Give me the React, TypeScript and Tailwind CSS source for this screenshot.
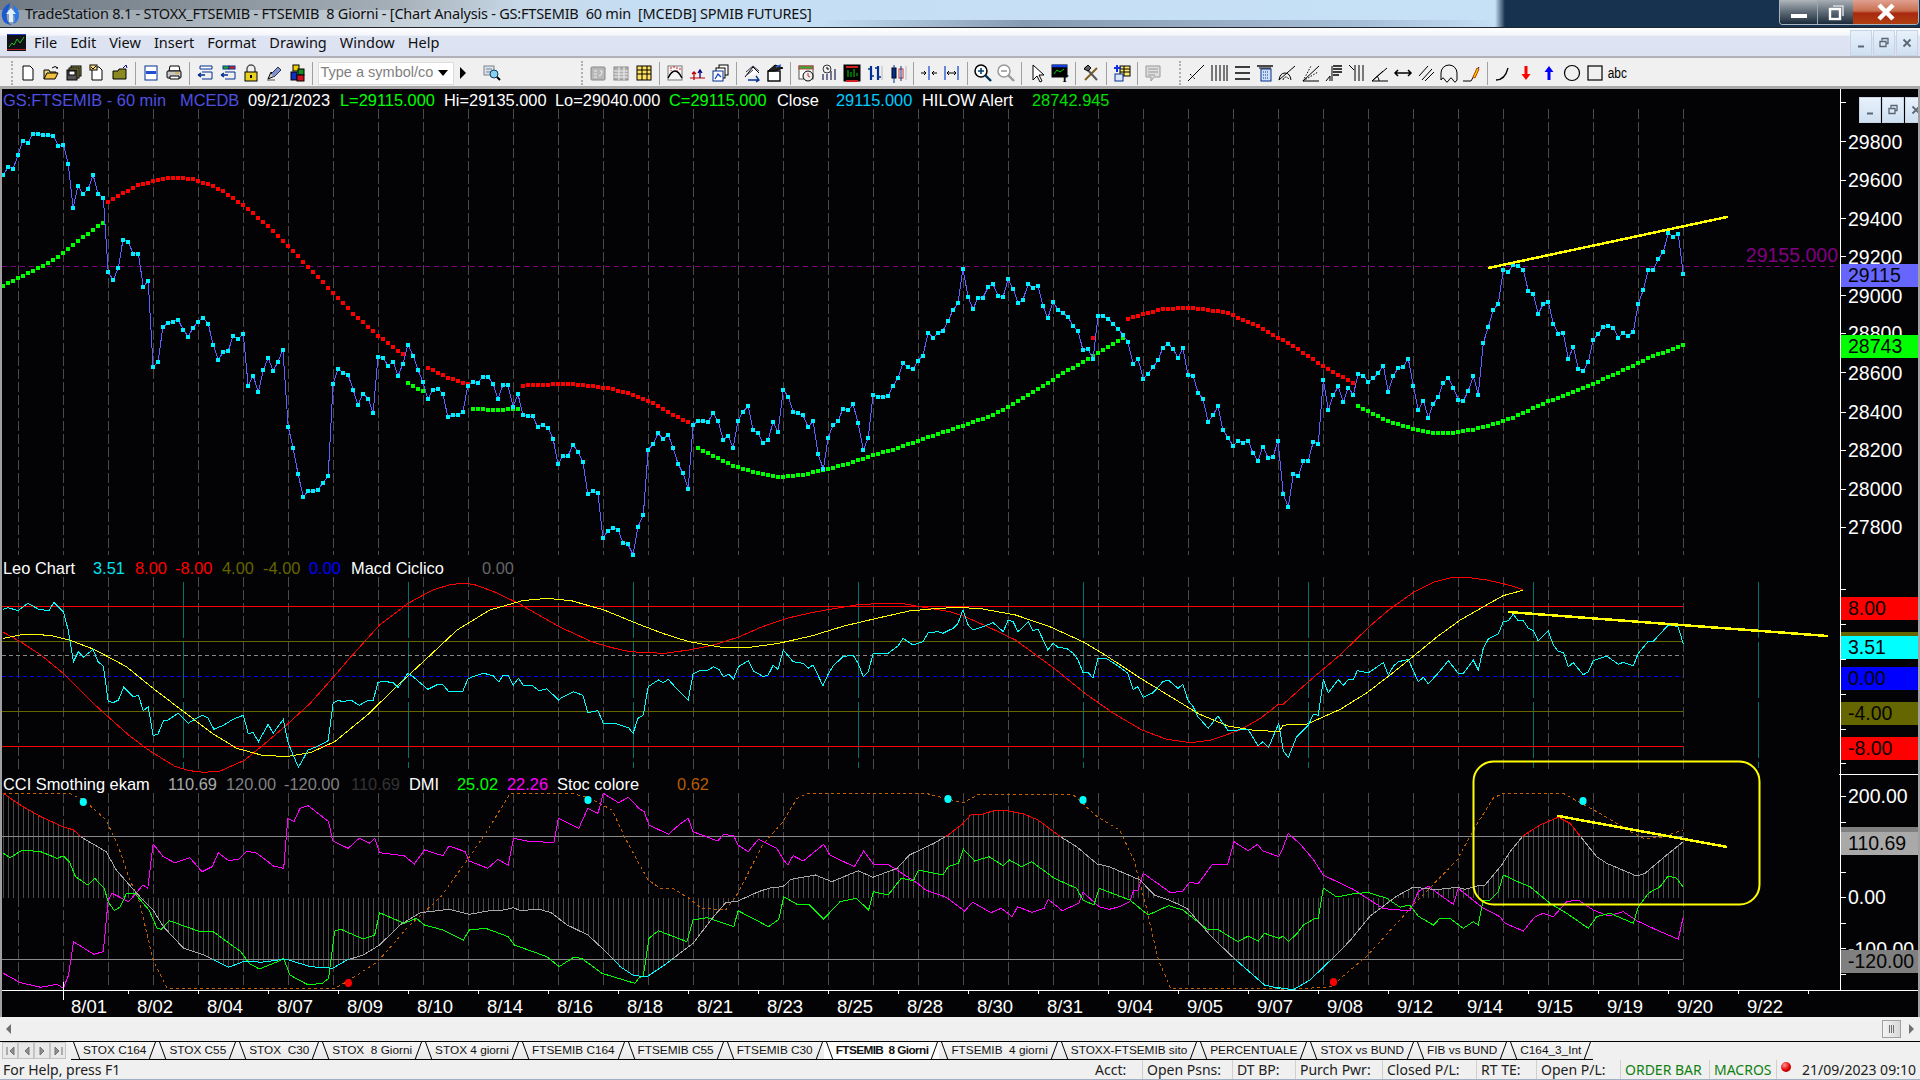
import type { ReactNode } from "react";

type P = [number, number];

// reads points off the picture in crop coordinates, so each crop gets its own scale
const conv = (sx: number, ox: number, sy: number, oy: number) => (a: number[]) => {
  const r: P[] = [];
  for (let i = 0; i < a.length; i += 2) r.push([ox + a[i] / sx, oy + a[i + 1] / sy]);
  return r;
};
const zA = conv(2.45, 0, 3, 90);
const zB = conv(2.45, 640, 3, 90);
const zC = conv(3, 1200, 2.24, 280);
const zD = conv(3, 1440, 3, 90);
const zE = conv(2.45, 0, 3, 560);
const zF = conv(2.45, 640, 3, 560);
const zG = conv(3, 1440, 3, 570);

const price: P[] = [
  ...zA([8,255,20,230,32,237,44,195,56,152,68,159,80,131,93,131,105,135,118,135,130,137,143,167,155,164,167,222,179,354,191,287,203,312,216,296,228,255,240,312,253,323,265,546,277,570,290,534,301,450,314,455,326,491,339,491,351,591,363,572,375,830,387,816,399,711,412,698,424,695,436,689,449,719,461,740,473,713,485,695,498,683,510,701,522,764,535,810,547,785,559,783,571,738,583,747,596,732,608,888,620,857,633,906,645,840,657,803,669,843,681,815,693,779,706,1010,718,1073,730,1151,743,1221,755,1203,767,1203,779,1199,791,1179,804,1158,816,882,828,836,840,848,853,855,865,899,877,945,889,911,902,926,914,969,926,801,938,803,951,827,963,815,975,858,987,822,999,764,1012,797,1024,840,1036,875,1048,927,1061,899,1073,896,1085,911,1097,981,1110,975,1122,975,1134,966,1146,888,1158,875,1171,878,1183,860,1195,860,1208,881,1220,927,1232,885,1244,885,1257,950,1269,913,1281,974,1293,978,1305,978,1317,1011,1330,1005,1342,1013,1355,1046,1367,1122,1379,1098,1391,1098,1404,1065,1416,1085,1428,1115,1440,1212,1452,1203,1465,1210,1477,1344,1489,1323,1502,1314,1514,1319,1526,1358,1538,1362,1551,1394,1563,1310]),
  ...zB([8,1275,20,1079,32,1062,44,1030,57,1047,69,1034,81,1073,93,1121,105,1149,118,1197,130,1005,142,993,155,993,167,995,179,970,191,992,204,1050,216,1037,228,1074,240,993,252,965,265,949,277,1019,289,1030,302,1060,314,1050,326,995,338,1026,351,899,363,920,375,965,387,970,399,975,412,1012,424,992,436,1091,449,1138,461,1043,473,1005,485,994,497,956,510,960,522,943,534,998,547,1080,559,1043,571,914,583,920,596,922,608,917,620,887,632,864,644,820,657,832,669,838,681,812,693,797,706,728,718,743,730,730,742,722,755,692,767,660,779,640,791,536,804,622,816,657,828,623,840,623,853,592,865,583,877,617,889,622,902,568,914,596,926,640,938,629,951,583,963,594,975,587,987,647,999,685,1012,635,1024,659,1036,669,1048,680,1061,708,1073,722,1085,780,1097,776,1110,807,1122,678,1134,677,1147,686,1159,702,1171,716,1183,734,1195,755,1208,822,1220,806,1233,867,1245,851,1257,832,1269,811,1281,773,1294,761,1306,777,1318,804,1330,773,1342,854,1355,857,1367,908,1379,927,1392,995,1404,974,1416,949,1428,1021,1441,1043,1453,1068,1465,1052,1477,1058,1490,1052,1502,1090,1514,1113,1526,1070,1539,1104,1551,1100,1563,1052]),
  ...zC([250,480,265,508,280,435,295,439,310,405,325,405,340,362,355,367,370,224,385,291,400,258,415,238,430,274,445,241,460,257,475,210,490,214,505,228,520,220,535,208,550,192,565,250,580,215,595,197,610,194,625,176,640,237,655,291,670,270,685,309,700,277,715,262,730,230,745,219,760,241,775,268,790,271,805,248,820,215,835,257]),
  ...zD([130,759,145,711,160,660,175,641,190,540,205,546,220,525,235,527,250,540,265,603,280,611,295,672,310,642,325,635,340,702,355,731,370,729,385,807,400,771,415,836,430,843,445,815,460,749,475,732,490,711,505,708,520,714,535,743,550,729,565,737,580,725,595,641,610,600,625,540,640,539,655,507,670,486,685,429,700,441,715,432,730,552]),
];

const dotRuns: { c: string; p: P[] }[] = [
  { c: "#00ff00", p: zA([8,588,81,542,130,512,180,465,228,420,253,398]) },
  { c: "#ff0000", p: zA([265,335,340,285,400,266,430,263,470,267,510,282,547,303,596,345,645,395,705,465,755,530,816,608,865,670,925,735,988,793]) },
  { c: "#ff0000", p: zA([1048,833,1097,862,1146,882]) },
  { c: "#00ff00", p: zA([999,878,1012,887,1036,903]) },
  { c: "#00ff00", p: zA([1158,957,1220,960,1270,956]) },
  { c: "#ff0000", p: [...zA([1281,887,1330,885,1367,881,1428,885,1490,895,1526,905,1563,920]), ...zB([8,927,32,940,81,975,118,996])] },
  { c: "#00ff00", p: zB([142,1073,180,1098,229,1127,277,1146,326,1158,351,1161,400,1155,449,1140,510,1122,571,1095,632,1075,693,1047,754,1023,816,997,865,975,926,935,987,890,1036,850,1085,818,1122,790,1183,745]) },
  { c: "#ff0000", p: zB([1110,743,1112,743]) },
  { c: "#ff0000", p: [...zB([1195,687,1232,672,1281,658,1330,654,1380,656,1441,670,1490,695,1526,715,1563,742]), ...zC([250,135,295,155,340,178,385,200,430,218,460,230])] },
  { c: "#00ff00", p: [...zC([475,283,520,300,565,316,610,327,655,337,700,342,760,342,820,335,880,323,940,308,985,293,1045,272,1105,255,1165,237,1225,218,1285,197,1345,175,1435,150]), ...zD([730,765])] },
];

const leoCyan: P[] = [
  ...zE([8,148,20,143,44,152,68,130,95,148,120,152,132,127,155,155,167,210,180,305,192,275,204,292,228,268,240,305,253,318,265,423,277,428,290,420,303,382,326,410,339,406,351,452,363,440,375,527,387,522,400,483,412,480,436,460,461,490,485,472,497,466,510,475,524,508,547,496,571,478,596,466,608,520,620,518,633,545,657,493,669,520,694,478,706,550,731,622,755,570,780,558,804,542,816,430,828,421,840,425,860,420,880,436,902,421,914,422,926,367,940,364,963,368,975,383,999,340,1012,350,1048,388,1073,373,1085,374,1100,396,1122,394,1134,393,1146,358,1158,350,1185,340,1208,347,1222,365,1232,347,1245,347,1257,376,1270,355,1283,378,1305,377,1320,392,1340,386,1368,420,1380,410,1405,395,1428,406,1440,458,1465,452,1478,490,1505,490,1540,503,1551,520,1563,475]),
  ...zF([8,465,20,380,45,360,57,368,69,358,95,393,118,420,130,342,145,333,167,330,180,320,193,328,204,350,218,343,229,358,241,320,265,302,278,333,302,350,314,345,326,316,338,328,351,270,375,305,400,310,412,325,424,315,448,377,461,342,473,318,497,290,522,285,534,310,547,350,559,335,571,282,608,280,632,258,644,235,669,255,693,245,706,218,730,215,742,220,767,205,779,190,791,150,804,195,816,210,840,200,865,188,890,215,902,180,914,185,926,215,951,185,963,212,975,207,999,270,1012,250,1025,263,1045,265,1061,280,1073,300,1085,337,1097,337,1110,354,1122,295,1145,297,1171,318,1195,340,1208,388,1220,380,1233,412,1257,398,1281,365,1294,360,1318,385,1330,373,1342,420,1355,440,1367,470,1392,505,1416,468,1441,512,1490,508,1514,558,1526,545,1540,562,1565,490]),
  ...zC([250,1055,265,1070,290,1023,325,997,340,973,355,975,370,895,385,925,415,895,430,908,445,895,460,895,472,875,505,880,550,857,565,885,580,865,595,855,625,850,655,900,670,890,685,905,715,880]),
  ...zG([25,272,55,310,70,310,100,270,115,300,130,235,145,207,175,192,190,155,205,152,220,133,235,153,250,152,265,175,280,182,295,213,325,183,340,225,355,245,370,247,385,290,400,278,430,314,445,305,460,272,500,258,535,283,550,277,580,287,595,250,625,214,640,214,685,165,700,165,715,172,730,222]),
];

const leoRed: P[] = [
  ...zE([8,217,50,245,100,285,160,345,220,420,260,465,320,530,370,575,430,620,465,632,500,637,540,633,600,600,650,550,700,497,760,430,800,375,860,290,930,195,1000,130,1060,90,1100,75,1130,70,1160,73,1210,95,1270,130,1370,200,1450,245,1490,260,1530,272,1565,277]),
  ...zF([60,280,120,270,180,255,240,232,300,200,360,175,420,158,480,145,530,135,590,130,650,132,700,143,760,155,800,172,860,205,920,240,970,285,1020,330,1090,400,1160,460,1230,510,1290,538,1350,548,1400,540,1470,510,1520,475,1565,432]),
  ...zC([250,950,325,900,420,840,510,775,570,737,640,700,700,677,760,666,800,666,860,672,920,682,968,693]),
];

const leoYellow: P[] = [
  ...zE([8,235,50,225,90,223,130,228,170,240,230,268,310,320,370,380,450,455,520,520,580,565,640,585,700,590,760,578,820,545,900,465,980,370,1050,290,1120,210,1200,150,1280,122,1340,115,1400,122,1480,150,1565,193]),
  ...zF([60,222,120,245,200,262,270,262,340,250,420,228,500,198,580,175,660,153,720,146,780,142,840,147,920,165,1000,198,1085,245,1140,285,1220,350,1300,410,1370,462,1440,498,1500,510,1565,515]),
  ...zC([250,997,320,995,420,962,500,925,570,885,640,843,710,800,780,762,850,732,910,707,968,695]),
];

const cci: P[] = [
  ...zE([8,700,50,735,100,770,150,798,180,810,200,832,225,850,260,875,285,930,310,965,350,1020,375,1050,400,1100,450,1165,500,1185,560,1222,600,1203,640,1207,700,1197,760,1220,815,1225,850,1200,890,1185,930,1155,980,1095,1030,1058,1100,1048,1150,1063,1200,1052,1225,1052,1258,1043,1275,1052,1320,1047,1350,1058,1390,1095,1440,1125,1480,1170,1520,1220,1550,1245,1565,1248]),
  ...zF([20,1248,60,1215,130,1150,180,1070,210,1028,240,1023,290,995,320,983,350,980,370,958,430,945,470,965,535,932,570,952,630,925,660,885,720,850,755,825,790,792,810,765,840,762,870,751,895,751,940,762,975,780,1030,830,1070,860,1120,912,1150,920,1225,960,1260,1005,1300,1022,1340,1045,1400,1130,1460,1200,1530,1275,1565,1285]),
  ...zC([235,1585,280,1590,330,1568,390,1525,450,1480,510,1425,590,1380,640,1360,700,1365,715,1365]),
  ...zG([0,958,50,952,75,958,110,948,135,945,185,885,210,845,250,797,300,765,355,742,390,760,430,810,470,860,500,880,590,918,615,910,680,855,730,815]),
];

const dmiGreen: P[] = [
  ...zE([8,880,25,893,55,870,100,875,140,895,155,888,170,905,185,950,215,975,232,955,255,985,265,1025,280,1052,295,1040,310,1000,330,1000,365,1050,385,1105,395,1108,415,1082,490,1115,520,1113,590,1175,610,1210,635,1227,680,1205,695,1195,710,1245,755,1275,790,1270,805,1255,820,1113,835,1108,890,1137,918,1125,930,1058,990,1090,1020,1075,1040,1095,1085,1110,1135,1140,1150,1110,1190,1105,1245,1130,1260,1155,1340,1190,1370,1220,1405,1192,1425,1195,1475,1240,1555,1270,1565,1255]),
  ...zF([8,1248,22,1135,45,1112,115,1145,130,1080,165,1073,230,1100,240,1052,315,1100,340,1078,352,1010,385,1033,415,1035,450,1077,490,1025,530,1015,560,1050,572,995,608,1005,640,955,670,962,682,930,742,945,755,920,780,910,792,867,820,903,855,890,890,917,905,900,935,920,960,905,1015,955,1070,985,1085,1020,1112,1035,1125,985,1200,1020,1245,1065,1295,1037,1330,1050,1390,1108,1415,1108,1465,1145,1490,1128,1515,1143,1530,1120,1565,1135]),
  ...zC([250,1470,265,1482,290,1465,310,1445,345,1430,355,1430,370,1362,410,1382,460,1375,505,1372,560,1385,600,1405,630,1400,655,1425,700,1445]),
  ...zG([0,1045,30,1045,70,1075,100,1055,115,1065,130,990,150,990,175,965,190,915,240,938,270,950,330,1000,380,1030,445,1075,470,1040,510,1030,580,1060,595,1010,625,970,660,950,685,918,710,925,730,952]),
];

const dmiMagenta: P[] = [
  ...zE([8,1240,50,1268,100,1282,140,1273,155,1285,168,1245,180,1145,230,1183,253,1175,265,1020,275,1000,315,1025,350,975,362,985,375,852,400,890,428,908,465,893,495,935,520,920,535,878,560,902,585,897,605,873,630,880,670,918,695,925,705,775,720,785,735,745,755,737,805,785,815,843,853,865,880,835,905,850,918,835,930,878,990,887,1015,912,1040,870,1085,887,1100,858,1140,875,1148,902,1195,925,1220,898,1245,916,1258,835,1300,845,1357,847,1368,775,1418,805,1440,745,1465,760,1478,700,1515,728,1540,712,1565,745]),
  ...zF([10,755,22,795,70,823,95,795,118,775,130,815,190,843,205,823,230,828,240,855,265,875,290,838,335,865,352,900,362,915,375,887,400,903,450,853,465,885,525,920,548,873,572,912,610,915,680,970,700,990,750,1012,795,1053,815,1027,860,1058,885,1045,912,1070,925,1040,960,1057,990,1045,1000,1018,1035,1052,1075,1030,1085,997,1125,1040,1150,1048,1175,1040,1200,1025,1210,990,1220,990,1233,940,1300,998,1330,993,1345,968,1368,970,1403,912,1440,912,1455,845,1490,872,1513,853,1525,872,1565,890]),
  ...zC([250,1270,265,1240,300,1263,340,1298,370,1333,460,1365,550,1408,630,1413,655,1370,685,1358,710,1372]),
  ...zG([0,975,40,1003,55,955,130,1015,180,1040,195,1060,250,1083,285,1040,310,1030,340,1040,380,995,415,990,460,1020,505,1038,550,1025,590,1052,650,1080,715,1108,730,1040]),
];

const stoch: P[] = [
  ...zE([8,700,170,700,205,720,260,780,290,860,315,950,340,1020,360,1120,375,1200,410,1285,820,1285,850,1265,925,1205,1000,1100,1080,1010,1145,900,1190,820,1250,700,1400,700,1440,712,1500,750,1530,830,1565,910]),
  ...zF([20,960,50,985,80,985,120,1015,150,1045,210,1050,240,1000,300,855,350,785,385,715,410,700,700,700,755,717,792,728,830,703,1060,703,1120,770,1175,810,1210,900,1240,1040,1270,1200,1300,1285,1565,1285]),
  ...zC([250,1590,400,1583,420,1565,500,1515,640,1400,770,1300,830,1220,880,1160,910,1150,1090,1150,1200,1195,1290,1235]),
  ...zG([610,805,660,803,700,790,730,780]),
];

const lerp = (pts: P[], x: number) => {
  for (let i = 1; i < pts.length; i++) {
    if (x <= pts[i][0]) {
      const [x0, y0] = pts[i - 1];
      const [x1, y1] = pts[i];
      return y0 + ((y1 - y0) * (x - x0)) / (x1 - x0 || 1);
    }
  }
  return pts[pts.length - 1][1];
};

const bars: number[] = [];
for (let x = 3.3; x < 1684; x += 5) bars.push(x);
const grid: number[] = [];
for (let k = 0; k < 38; k++) grid.push(18.3 + 45 * k);
const pts = (p: P[]) => p.map(([x, y]) => `${x.toFixed(1)},${y.toFixed(1)}`).join(" ");

const SANS = "font-['Liberation_Sans',Arial,sans-serif]";

function Chart() {
  return (
    <svg className="block" width="1920" height="928" viewBox="0 89 1920 928" shapeRendering="crispEdges">
      <defs>
        <clipPath id="cci-top"><rect x="0" y="0" width="1700" height="836.7" /></clipPath>
        <clipPath id="cci-mid"><rect x="0" y="836.7" width="1700" height="122.6" /></clipPath>
        <clipPath id="cci-low"><rect x="0" y="959.3" width="1700" height="40" /></clipPath>
      </defs>

      {grid.map((x) => (
        <g key={x} stroke="#4a4a4a" strokeDasharray="10 3">
          <line x1={x} x2={x} y1="109" y2="555" />
          <line x1={x} x2={x} y1="577" y2="770" />
          <line x1={x} x2={x} y1="793" y2="987" />
        </g>
      ))}

      {/* price pane */}
      <line x1="2" x2="1837" y1="266.500" y2="266.500" stroke="#800080" strokeDasharray="5 4" />
      {dotRuns.map((run, i) =>
        bars
          .filter((x) => x >= run.p[0][0] - 2.5 && x <= run.p[run.p.length - 1][0] + 2.5)
          .map((x) => <rect key={`${i}-${x}`} x={x - 2} y={lerp(run.p, x) - 2} width="4" height="4" fill={run.c} />),
      )}
      <polyline points={pts(price)} fill="none" stroke="#6060ff" />
      {price.map(([x, y]) => <rect key={x} x={x - 2} y={y - 2} width="4" height="4" fill="#00f0ff" />)}
      <line x1="1488.3" y1="268" x2="1728.3" y2="216.7" stroke="#ffff00" strokeWidth="2.500" />

      {/* leo chart pane */}
      {[183.3, 408.3, 633.3, 858.3, 1083.3, 1308.3, 1533.3, 1758.3].map((x) => (
        <line key={x} x1={x} x2={x} y1="582" y2="768" stroke="#007070" strokeDasharray="56 4" />
      ))}
      <g fill="none">
        <line x1="2" x2="1683" y1="606.500" y2="606.500" stroke="#ff0000" />
        <line x1="2" x2="1683" y1="746.500" y2="746.500" stroke="#ff0000" />
        <line x1="2" x2="1683" y1="641.500" y2="641.500" stroke="#666600" />
        <line x1="2" x2="1683" y1="711.500" y2="711.500" stroke="#666600" />
        <line x1="2" x2="1683" y1="655.500" y2="655.500" stroke="#888" strokeDasharray="4 3" />
        <line x1="2" x2="1683" y1="676.500" y2="676.500" stroke="#0000ff" strokeDasharray="4 3" />
      </g>
      <polyline points={pts(leoRed)} fill="none" stroke="#ff0000" />
      <polyline points={pts(leoYellow)} fill="none" stroke="#ffff00" />
      <polyline points={pts(leoCyan)} fill="none" stroke="#00ffff" />
      <line x1="1508.3" y1="612" x2="1827.7" y2="636" stroke="#ffff00" strokeWidth="2.500" />

      {/* cci pane */}
      {bars.map((x) => (
        <line key={x} x1={x} x2={x} y1="898" y2={lerp(cci, x)} stroke="#4a4a4a" />
      ))}
      <line x1="2" x2="1683" y1="836.500" y2="836.500" stroke="#888" />
      <line x1="2" x2="1683" y1="959.500" y2="959.500" stroke="#888" />
      <polyline points={pts(stoch)} fill="none" stroke="#c06000" strokeDasharray="3 3" />
      <polyline points={pts(dmiMagenta)} fill="none" stroke="#ff00ff" />
      <polyline points={pts(dmiGreen)} fill="none" stroke="#00ff00" />
      <polyline points={pts(cci)} fill="none" stroke="#ff0000" clipPath="url(#cci-top)" />
      <polyline points={pts(cci)} fill="none" stroke="#a8a8a8" clipPath="url(#cci-mid)" />
      <polyline points={pts(cci)} fill="none" stroke="#00ffff" clipPath="url(#cci-low)" />
      <g shapeRendering="geometricPrecision">
        {[[83.3, 802], [588, 800], [948, 799], [1083, 800], [1583, 801]].map(([x, y]) => (
          <ellipse key={x} cx={x} cy={y} rx="3.6" ry="4" fill="#00ffff" />
        ))}
        <ellipse cx="348.4" cy="983" rx="3.6" ry="4" fill="#ff0000" />
        <ellipse cx="1333.5" cy="982" rx="3.6" ry="4" fill="#ff0000" />
        <rect x="1473.5" y="761.5" width="286" height="143" rx="20" fill="none" stroke="#ffff00" strokeWidth="2" />
      </g>
      <line x1="1556.7" y1="815.7" x2="1727.3" y2="847" stroke="#ffff00" strokeWidth="2.500" />

      {/* axes */}
      <g stroke="#fff">
        <line x1="1840.500" x2="1840.500" y1="89" y2="990" />
        <line x1="0" x2="1918" y1="990.500" y2="990.500" />
        <line x1="1839" x2="1918" y1="774.500" y2="774.500" />
        <line x1="63.500" x2="63.500" y1="982" y2="1000" />
        {dateTicks.map((x) => <line key={x} x1={x} x2={x} y1="990" y2="994" />)}
        {[102, 141.7, 180, 218.7, 256.7, 295.7, 333, 372.7, 412, 450, 489, 527, 589, 624, 659, 694, 729, 763, 796, 822, 872, 897, 923, 948, 974].map((y) => (
          <line key={y} x1="1840" x2="1846" y1={y} y2={y} />
        ))}
      </g>
    </svg>
  );
}

const dateTicks: number[] = [];
for (let k = 0; k < 25; k++) dateTicks.push(128.6 + 70 * k);
const dates = ["8/02","8/04","8/07","8/09","8/10","8/14","8/16","8/18","8/21","8/23","8/25","8/28","8/30","8/31","9/04","9/05","9/07","9/08","9/12","9/14","9/15","9/19","9/20","9/22"];
const axisLabels: [string, number][] = [
  ["29800", 141.7], ["29600", 180], ["29400", 218.7], ["29200", 256.7], ["29000", 295.7], ["28800", 333], ["28600", 372.7],
  ["28400", 412], ["28200", 450], ["28000", 489], ["27800", 527], ["200.00", 795.7], ["0.00", 897], ["-100.00", 949],
];
const axisBoxes: [string, number, string][] = [
  ["29115", 264, "bg-[#6666ff]"], ["28743", 335, "bg-[#00ff00]"],
  ["", 632, "bg-[#666600]"], ["8.00", 597, "bg-[#ff0000]"], ["3.51", 636, "bg-[#00ffff]"], ["0.00", 667, "bg-[#0000ff]"],
  ["-4.00", 702, "bg-[#666600]"], ["-8.00", 737, "bg-[#ff0000]"],
  ["", 827, "bg-[#808080]"], ["110.69", 832, "bg-[#a9a9a9]"], ["-120.00", 950, "bg-[#808080]"],
];
const legends: { t: string; c: string }[] = [
  { t: "GS:FTSEMIB - 60 min", c: "top-[2px] left-[3px] text-[#4f4fe0]" },
  { t: "MCEDB", c: "top-[2px] left-[180px] text-[#4f4fe0]" },
  { t: "09/21/2023", c: "top-[2px] left-[248px] text-white" },
  { t: "L=29115.000", c: "top-[2px] left-[340px] text-[#00ff00]" },
  { t: "Hi=29135.000", c: "top-[2px] left-[444px] text-white" },
  { t: "Lo=29040.000", c: "top-[2px] left-[555px] text-white" },
  { t: "C=29115.000", c: "top-[2px] left-[669px] text-[#00ff00]" },
  { t: "Close", c: "top-[2px] left-[777px] text-white" },
  { t: "29115.000", c: "top-[2px] left-[836px] text-[#00ccff]" },
  { t: "HILOW Alert", c: "top-[2px] left-[922px] text-white" },
  { t: "28742.945", c: "top-[2px] left-[1032px] text-[#00e000]" },
  { t: "Leo Chart", c: "top-[470px] left-[3px] text-white" },
  { t: "3.51", c: "top-[470px] left-[93px] text-[#00e5f0]" },
  { t: "8.00", c: "top-[470px] left-[135px] text-[#ff0000]" },
  { t: "-8.00", c: "top-[470px] left-[175px] text-[#ff0000]" },
  { t: "4.00", c: "top-[470px] left-[222px] text-[#666600]" },
  { t: "-4.00", c: "top-[470px] left-[263px] text-[#666600]" },
  { t: "0.00", c: "top-[470px] left-[309px] text-[#0000ff]" },
  { t: "Macd Ciclico", c: "top-[470px] left-[351px] text-white" },
  { t: "0.00", c: "top-[470px] left-[482px] text-[#666666]" },
  { t: "CCI Smothing ekam", c: "top-[686px] left-[3px] text-white" },
  { t: "110.69", c: "top-[686px] left-[168px] text-[#a9a9a9]" },
  { t: "120.00", c: "top-[686px] left-[226px] text-[#808080]" },
  { t: "-120.00", c: "top-[686px] left-[284px] text-[#808080]" },
  { t: "110.69", c: "top-[686px] left-[351px] text-[#333333]" },
  { t: "DMI", c: "top-[686px] left-[409px] text-white" },
  { t: "25.02", c: "top-[686px] left-[457px] text-[#00ff00]" },
  { t: "22.26", c: "top-[686px] left-[507px] text-[#ff00ff]" },
  { t: "Stoc colore", c: "top-[686px] left-[557px] text-white" },
  { t: "0.62", c: "top-[686px] left-[677px] text-[#b85c00]" },
];

function ChartPane() {
  return (
    <div className={`relative h-[928px] w-full shrink-0 overflow-hidden border-x-2 border-x-[#a0a0a0] bg-[#030306] ${SANS}`}>
      <div className="absolute -left-[2px] top-0">
        <Chart />
      </div>
      {legends.map((l, i) => (
        <span key={i} className={`absolute -ml-[2px] whitespace-pre text-[16.4px] leading-[19px] ${l.c}`}>{l.t}</span>
      ))}
      <span className="absolute right-[80px] top-[154px] text-[19.5px] leading-[24px] text-[#800080]">29155.000</span>
      {axisLabels.map(([t, y]) => (
        <span key={t} className="absolute left-[1846px] text-[19.5px] leading-[24px] text-white" style={{ top: y - 89 - 12 }}>{t}</span>
      ))}
      {axisBoxes.map(([t, y, bg], i) => (
        <div key={i} className={`absolute left-[1839px] h-[23px] w-[77px] pl-[7px] text-[19.5px] leading-[23px] text-[#050505] ${bg}`} style={{ top: y - 89 }}>{t}</div>
      ))}
      <span className="absolute left-[69px] top-[906px] text-[18.5px] leading-[24px] text-white">8/01</span>
      {dates.map((d, i) => (
        <span key={d} className="absolute top-[906px] text-[18.5px] leading-[24px] text-white" style={{ left: 135 + 70 * i }}>{d}</span>
      ))}
      <div className="absolute right-0 top-[8px] flex gap-[1px]">
        <ChildBtn kind="min" />
        <ChildBtn kind="max" />
        <div className="w-[13px] overflow-hidden"><ChildBtn kind="close" /></div>
      </div>
    </div>
  );
}

function ChildBtn({ kind }: { kind: "min" | "max" | "close" }) {
  return (
    <div className="flex h-[26px] w-[22px] items-center justify-center border border-[#c8d4e4] bg-[linear-gradient(#e8f1fb,#cfe0f2)]">
      <svg width="12" height="12" viewBox="0 0 12 12" fill="none" stroke="#5a6672" strokeWidth="1.3">
        {kind === "min" && <path d="M3 9.5h6" strokeWidth="2" />}
        {kind === "max" && <path d="M4 3.5V1.5h6v5H8M2 4.5h6v5H2z" />}
        {kind === "close" && <path d="M2.5 2.5l7 7M9.5 2.5l-7 7" strokeWidth="1.8" />}
      </svg>
    </div>
  );
}

// toolbar glyphs
const S = ({ children }: { children: ReactNode }) => (
  <svg width="20" height="20" viewBox="0 0 20 20" fill="none" stroke="#000" strokeWidth="1">{children}</svg>
);
const icons: Record<string, ReactNode> = {
  new: <path d="M5 3h7l3 3v11H5z" fill="#fff" />,
  open: <><path d="M3 16V7h5l1 2h6v2" fill="#e8d080" /><path d="M3 16l3-6h11l-3 6z" fill="#f0c040" /><path d="M11 5q3-3 6 0M17 5l-2 0" stroke="#000" /></>,
  saves: <><rect x="7" y="3" width="10" height="10" fill="#8a8a50" /><rect x="5" y="5" width="10" height="10" fill="#a09a50" /><rect x="3" y="7" width="10" height="10" fill="#555" /><rect x="5" y="8" width="6" height="4" fill="#fff" /></>,
  check: <><path d="M5 4h7l3 3v10H5z" fill="#fff" /><rect x="3" y="2" width="7" height="5" fill="#ffe070" /><path d="M4 4l2 2 3-3" /></>,
  folderbox: <><path d="M3 16V8h5l1-2h7v10z" fill="#8a8a20" /><path d="M13 5l3-3 1 3" stroke="#000080" /></>,
  win: <><rect x="4" y="3" width="12" height="14" fill="#fff" stroke="#003090" /><rect x="5" y="8" width="10" height="3" fill="#2050d0" stroke="none" /></>,
  print: <><path d="M6 3h9l1 5H5z" fill="#fff" /><rect x="3" y="8" width="14" height="7" rx="1" fill="#c8c8c8" /><path d="M6 13h9v3H6z" fill="#fff" /><path d="M11 10h4" stroke="#e0a000" /></>,
  tab1: <><path d="M5 3h12v3H5z" fill="#fff" stroke="#003090" /><path d="M7 9h10M7 16h10M17 9v7" stroke="#003090" /><path d="M3 12h7M3 12l3-2M3 12l3 2" stroke="#003090" strokeWidth="1.3" /></>,
  tab2: <><rect x="5" y="3" width="6" height="3" fill="#20b020" stroke="#003090" /><rect x="11" y="3" width="6" height="3" fill="#e02020" stroke="#003090" /><path d="M7 9h10M7 16h10M17 9v7" stroke="#003090" /><path d="M3 12h7M3 12l3-2M3 12l3 2" stroke="#003090" strokeWidth="1.3" /></>,
  lock: <><path d="M6 9V6a4 4 0 0 1 8 0v3" strokeWidth="1.5" stroke="#555" /><rect x="4" y="9" width="12" height="9" fill="#e8d020" /><rect x="9" y="12" width="2" height="3" fill="#000" stroke="none" /></>,
  sat: <><path d="M4 16l3-7 4 4z" fill="#ccc" /><path d="M7 11l7-7 3 3-7 7" fill="#8090d0" stroke="#334" /><path d="M3 17h8" stroke="#555" /></>,
  cubes: <><rect x="6" y="2" width="6" height="6" fill="#f0d000" /><rect x="11" y="6" width="6" height="6" fill="#109020" /><rect x="4" y="9" width="6" height="8" fill="#1030c0" /><rect x="10" y="12" width="7" height="6" fill="#d01020" /></>,
  calc: <><rect x="3" y="4" width="14" height="13" rx="1" fill="#b8b8b8" stroke="#888" /><path d="M6 8h3M6 11h3M6 14h3M12 8q3-1 2 2t-3 3" stroke="#eee" /></>,
  table: <><rect x="3" y="4" width="14" height="13" fill="#b0b0b0" stroke="#888" /><path d="M3 8h14M3 11h14M3 14h14M8 4v13M13 4v13" stroke="#eee" /></>,
  ytable: <><rect x="3" y="3" width="14" height="14" fill="#ffe060" /><path d="M3 7h14M3 11h14M8 3v14M13 3v14" /></>,
  wave: <><rect x="3" y="3" width="14" height="14" fill="#f4f4f4" stroke="#777" /><path d="M3 15q7-14 14 0" stroke="#000" strokeWidth="1.4" /><path d="M6 4v4M9 3v3M12 4v4M15 5v3" stroke="#d02020" strokeDasharray="2 1" /></>,
  arrows: <><path d="M6 17V9M4 11l2-2 2 2" stroke="#c00000" strokeWidth="1.3" /><path d="M12 8v7M10 10l2-3 2 3" stroke="#000080" strokeWidth="1.3" /><path d="M2 15h15" stroke="#c00000" /></>,
  stack: <><rect x="8" y="2" width="9" height="10" fill="#fff" /><rect x="5" y="5" width="9" height="10" fill="#fff" /><rect x="2" y="8" width="10" height="10" fill="#fff" stroke="#003090" /><path d="M4 16l3-5 3 3" stroke="#1040c0" strokeWidth="1.3" /></>,
  pg1: <><path d="M3 14l8-10 6 6" fill="#fff" /><path d="M4 9l7-6 6 5M5 12l6-5" stroke="#334" /><path d="M6 17h11M14 13l3 4-3 2" stroke="#003090" strokeWidth="1.3" /></>,
  pg2: <><rect x="3" y="8" width="12" height="10" fill="#fff" strokeWidth="1.4" /><path d="M3 8l7-6 8 3-8 3z" fill="#222" /><path d="M11 4l5-2" stroke="#3060d0" strokeWidth="1.5" /></>,
  cal: <><rect x="3" y="3" width="14" height="13" fill="#fff" stroke="#555" /><rect x="3" y="3" width="14" height="3" fill="#30b030" stroke="#c04040" /><circle cx="12" cy="13" r="5" fill="#eee" /><path d="M12 10v3l2 1" stroke="#c03030" /></>,
  clock: <><circle cx="8" cy="6" r="4" fill="#eee" stroke="#333" /><path d="M8 4v2h2" /><path d="M4 11v6M8 11v6M12 8v9M16 6v11" stroke="#557" strokeWidth="1.6" /></>,
  blackchart: <><rect x="2" y="2" width="16" height="16" fill="#000" /><path d="M4 4h12" stroke="#d02020" strokeWidth="2" /><path d="M4 18h12" stroke="#d02020" strokeWidth="2" /><path d="M6 7v7M9 9v5M12 6v8M15 10v3" stroke="#00d000" /></>,
  sticks: <><path d="M6 3v14M13 3v14" stroke="#003090" strokeWidth="2.2" /><path d="M3 6h3M6 13h3M10 5h3M13 14h3" stroke="#003090" strokeWidth="1.5" /><path d="M17 3v14" stroke="#bbb" /></>,
  candles: <><rect x="4" y="5" width="4" height="10" fill="#003090" /><rect x="11" y="6" width="4" height="9" fill="#fff" stroke="#c03030" /><path d="M6 2v18M13 3v15" stroke="#003090" /><path d="M18 3v14" stroke="#bbb" /></>,
  hl1: <><path d="M10 3v14" stroke="#2050d0" strokeWidth="1.3" /><path d="M2 10h5M13 10h5M5 8l2 2-2 2M15 8l-2 2 2 2" /></>,
  hl2: <><path d="M3 3v14M16 3v14" stroke="#2050d0" strokeWidth="1.3" /><path d="M5 10h9M7 8l-2 2 2 2M12 8l2 2-2 2" /></>,
  zin: <><circle cx="8" cy="8" r="6" fill="#fff" strokeWidth="1.5" /><path d="M8 5v6M5 8h6" stroke="#004070" strokeWidth="1.6" /><path d="M12 12l6 6" stroke="#003050" strokeWidth="2.4" /></>,
  zout: <><circle cx="8" cy="8" r="6" fill="#fff" stroke="#999" strokeWidth="1.5" /><path d="M5 8h6" stroke="#999" strokeWidth="1.6" /><path d="M12 12l6 6" stroke="#999" strokeWidth="2.4" /></>,
  cursor: <path d="M6 2v15l4-4 3 6 2-1-3-6h5z" fill="#fff" />,
  chartT: <><rect x="2" y="2" width="15" height="12" fill="#000" /><path d="M2 3h15" stroke="#1040e0" strokeWidth="2.5" /><path d="M4 11l3-4 3 2 4-3" stroke="#00d000" /><text x="11" y="19" fontSize="11" fontWeight="700" fill="#000" stroke="none" fontFamily="Liberation Serif">T</text></>,
  hammer: <><path d="M4 17L16 5" stroke="#806020" strokeWidth="2" /><path d="M4 4l12 13" stroke="#555" strokeWidth="2" /><path d="M3 6l4-4 3 3-3 3z" fill="#606060" /></>,
  addt: <><rect x="8" y="3" width="10" height="10" fill="#ffe870" /><path d="M8 6h10M8 9h10M12 3v10" /><path d="M5 2v7M2 5h7" stroke="#1030e0" strokeWidth="2" /><rect x="3" y="11" width="8" height="7" fill="#dce4f8" stroke="#003090" /></>,
  note: <><path d="M3 3h14v11h-6l-3 4v-4H3z" fill="#ddd" stroke="#999" /><path d="M5 6h10M5 9h10M5 12h7" stroke="#999" /></>,
  tl: <><path d="M2 18L18 2" /><path d="M4 11l5 5" strokeDasharray="2 1" /></>,
  vl: <path d="M3 2v16M7 2v16M11 2v16M15 2v16M18 2v16" />,
  hl: <path d="M3 4h15M3 10h15M3 16h15" strokeWidth="1.4" />,
  calclines: <><path d="M2 3h16" strokeWidth="1.4" /><rect x="6" y="6" width="10" height="12" fill="#cfe0f8" stroke="#003090" /><path d="M8 9h6M8 12h6M8 15h6" stroke="#003090" strokeDasharray="1 1" /><path d="M4 5h12" /></>,
  arc: <><path d="M1 17q1-7 6-7t6 7" /><path d="M1 17L17 3" /><path d="M5 17q1-3 3-3t3 3" strokeDasharray="2 1" /></>,
  fan: <><path d="M2 18h16M2 18L18 3" /><path d="M2 18L17 9M2 18L10 3" strokeDasharray="1.5 1.5" /></>,
  fib: <><path d="M2 18l4-5v5" /><path d="M9 3h9M9 6h9M9 9h9M9 12h6" strokeWidth="1.3" /><path d="M8 3v15" /></>,
  ch: <path d="M2 2l5 5M8 2v16M12 2v16M16 2v16" />,
  wedge: <><path d="M2 18h16M2 18L17 5M2 18L13 8" /><path d="M9 18q0-3-2-5" /></>,
  ruler: <path d="M2 10h16M5 7l-3 3 3 3M15 7l3 3-3 3" strokeWidth="1.5" />,
  par: <path d="M3 13L12 3M6 17L16 6M9 18L18 9" />,
  dome: <><path d="M2 17V10a8 8 0 0 1 16 0v7" /><path d="M2 17q2-4 4 0t4 0 4 0 4 0" /></>,
  pen: <><path d="M1 18h8l8-14" /><path d="M11 14l4-9 2 1-4 9z" fill="#f0d000" stroke="#c04000" /></>,
  curve: <path d="M3 17q9 0 12-12" strokeWidth="1.3" />,
  down: <path d="M8.5 3h3v8h3l-4.500 6-4.500-6h3z" fill="#ff0000" stroke="none" />,
  up: <path d="M8.500 17h3V9h3L10 3 5.500 9h3z" fill="#0000ff" stroke="none" />,
  circle: <circle cx="10" cy="10" r="7.500" strokeWidth="1.2" />,
  rect: <rect x="3" y="3" width="14" height="14" strokeWidth="1.2" />,
};
const Icon = ({ n }: { n: string }) => (
  <span className="flex h-[23px] w-[23px] shrink-0 items-center justify-center"><S>{icons[n]}</S></span>
);
const Sep = () => (
  <span className="flex h-[23px] w-[8px] shrink-0 justify-center"><span className="h-full w-px bg-[#a0a0a0]" /></span>
);
const Grip = ({ w }: { w: string }) => (
  <span className={`flex h-[24px] shrink-0 justify-end pr-[4px] ${w}`}>
    <span className="h-full w-[2px] border-l-2 border-dotted border-[#b0b0b0]" />
  </span>
);
const Group = ({ names }: { names: string }) => (
  <>{names.split(" ").map((n, i) => <Icon key={i} n={n} />)}</>
);

function Toolbar() {
  return (
    <div className="flex h-[30px] shrink-0 items-center overflow-hidden border-b-2 border-[#a8a8a8] bg-[#f0f0f0] pt-[2px]">
      <Grip w="w-[16.5px]" />
      <Group names="new open saves check folderbox" />
      <Sep />
      <Group names="win print" />
      <Sep />
      <Group names="tab1 tab2 lock sat cubes" />
      <Sep />
      <div className={`ml-[1px] flex h-[23px] w-[136px] shrink-0 items-center justify-between border border-[#dcdcdc] bg-white pl-[2px] pr-[5px] text-[14.5px] text-[#808080] ${SANS}`}>
        <span className="whitespace-pre">Type a symbol/co</span>
        <span className="h-0 w-0 border-x-[5px] border-t-[6px] border-x-transparent border-t-black" />
      </div>
      <span className="ml-[6px] h-0 w-0 border-y-[6px] border-l-[6px] border-y-transparent border-l-black" />
      <span className="ml-[15px] flex h-[23px] w-[23px] shrink-0 items-center justify-center">
        <S>
          <rect x="2" y="3" width="10" height="9" fill="#d8e4f4" stroke="#808080" />
          <path d="M4 6h6M4 9h6" stroke="#808080" />
          <circle cx="12" cy="11" r="4" fill="#8ad0f0" stroke="#104060" />
          <path d="M15 14l3 3" strokeWidth="2" />
        </S>
      </span>
      <Grip w="ml-[67px] w-[16px]" />
      <Group names="calc table ytable" />
      <Sep />
      <Group names="wave arrows stack" />
      <Sep />
      <Group names="pg1 pg2" />
      <Sep />
      <Group names="cal clock blackchart sticks candles" />
      <Sep />
      <Group names="hl1 hl2" />
      <Sep />
      <Group names="zin zout" />
      <Sep />
      <Group names="cursor chartT" />
      <Sep />
      <Group names="hammer" />
      <Sep />
      <Group names="addt" />
      <Sep />
      <Group names="note" />
      <Grip w="w-[20px]" />
      <Group names="tl vl hl calclines arc fan fib ch wedge ruler par dome pen" />
      <Sep />
      <Group names="curve down up circle rect" />
      <span className={`ml-[-1px] text-[14px] text-black ${SANS} scale-x-[0.85]`}>abc</span>
    </div>
  );
}

function TitleBar() {
  return (
    <div className="relative flex h-[28px] shrink-0 items-center overflow-hidden border-b border-[#20262c] bg-[linear-gradient(90deg,#949ea8_0,#a4aeb7_150px,#c8d3dc_420px,#c6def4_640px,#c6e0f6_1495px,#17324e_1505px,#17324e_100%)]">
      <div className="absolute inset-x-0 top-0 h-[10px] bg-[linear-gradient(90deg,rgba(70,80,90,0.45),rgba(70,80,90,0.25)_400px,rgba(255,255,255,0)_520px)]" />
      <div className="absolute bottom-0 left-[820px] h-[7px] w-[680px] bg-[linear-gradient(90deg,rgba(90,110,130,0),rgba(80,100,120,0.55)_30%,rgba(120,140,170,0.4)_80%,rgba(160,180,210,0))]" />
      <svg className="relative ml-[1px] shrink-0" width="19" height="24" viewBox="0 0 19 24">
        <path d="M9 1C3 4 0 9 1 15s6 8 10 8c-4-2-6-6-5-11S9 5 9 1z" fill="#1a5ad0" />
        <path d="M12 3c4 2 6 6 6 10s-2 8-6 9c2-3 2-6 1-9h-2l2-4z" fill="#2a78e8" />
        <path d="M8 20v-8H5l5-6 5 6h-3v8z" fill="#dfeeff" />
      </svg>
      <span className="relative ml-[5px] whitespace-pre pt-[1px] font-['Noto_Sans',sans-serif] text-[14.5px] tracking-[-0.22px] text-[#101010]">
        TradeStation 8.1 - STOXX_FTSEMIB - FTSEMIB  8 Giorni - [Chart Analysis - GS:FTSEMIB  60 min  [MCEDB] SPMIB FUTURES]
      </span>
      <div className="absolute right-[1px] top-0 flex h-[25px] overflow-hidden rounded-b-[4px] border border-t-0 border-[#a8b4c0]">
        <div className="flex w-[38px] items-end justify-center border-r border-[#9aa6b2] bg-[linear-gradient(#b0b6bc,#5e6a76_50%,#1c2c3c)] pb-[6px]">
          <span className="h-[4px] w-[16px] bg-white" />
        </div>
        <div className="flex w-[35px] items-center justify-center bg-[linear-gradient(#a8aeb4,#5e6a76_50%,#1c2c3c)]">
          <svg width="18" height="18" viewBox="0 0 18 18" fill="none" stroke="#fff" strokeWidth="2.4">
            <path d="M6 3h10v10" strokeWidth="1.5" stroke="#d8dce0" />
            <rect x="3" y="6" width="10" height="10" />
          </svg>
        </div>
        <div className="flex w-[65px] items-center justify-center bg-[linear-gradient(#e0a090,#c87050_45%,#a82810_55%,#b04010)]">
          <svg width="20" height="18" viewBox="0 0 20 18" fill="none" stroke="#fff" strokeWidth="4.500">
            <path d="M3 2l14 14M17 2L3 16" />
          </svg>
        </div>
      </div>
    </div>
  );
}

function MenuBar() {
  const items = ["File", "Edit", "View", "Insert", "Format", "Drawing", "Window", "Help"];
  return (
    <div className="relative flex h-[30px] shrink-0 items-center border-b-2 border-[#b0b0b8] bg-[linear-gradient(#ffffff_0,#f4f6fb_25%,#dfe4f3_30%,#dde2f2_100%)]">
      <svg className="ml-[7px] shrink-0" width="19" height="17" viewBox="0 0 19 17">
        <rect width="19" height="17" fill="#101018" />
        <path d="M2 13l3-4 2 2 3-6 3 4 4-6" stroke="#20c020" fill="none" />
        <path d="M0 15.500h19" stroke="#c02020" />
        <path d="M0 0.500h19" stroke="#2040d0" />
      </svg>
      <div className="ml-[8px] flex gap-[13px] pt-[2px] font-['Noto_Sans',sans-serif] text-[14.5px] text-[#101010]">
        {items.map((m) => <span key={m}>{m}</span>)}
      </div>
      <div className="absolute right-[2px] top-[2px] flex gap-[1px]">
        <ChildBtn kind="min" />
        <ChildBtn kind="max" />
        <ChildBtn kind="close" />
      </div>
    </div>
  );
}

const tabs = ["STOX C164", "STOX C55", "STOX  C30", "STOX  8 Giorni", "STOX 4 giorni", "FTSEMIB C164", "FTSEMIB C55", "FTSEMIB C30", "FTSEMIB  8 Giorni", "FTSEMIB  4 giorni", "STOXX-FTSEMIB sito", "PERCENTUALE", "STOX vs BUND", "FIB vs BUND", "C164_3_Int"];

function Tabs() {
  return (
    <div className="flex h-[19px] shrink-0 border-t border-black bg-[#f0f0f0]">
      <div className="flex h-[18px] w-[72px] shrink-0 pl-[2px]">
        {["M4 3v8M11 3l-4 4 4 4z", "M10 3l-4 4 4 4z", "M5 3l4 4-4 4z", "M11 3v8M4 3l4 4-4 4z"].map((d) => (
          <span key={d} className="flex h-[17px] w-[16px] items-center justify-center border border-[#c4c4c4] bg-[#e8e8e8]">
            <svg width="14" height="14" viewBox="0 0 14 14"><path d="M7 0" /><path d={d} fill="#909090" stroke="#707070" /></svg>
          </span>
        ))}
      </div>
      <div className={`flex h-[18px] ${SANS} text-[11.8px] text-[#101010]`}>
        {tabs.map((t) => {
          const active = t === "FTSEMIB  8 Giorni";
          return (
            <span key={t} className={`relative -ml-[1px] whitespace-pre border-b border-black px-[12px] leading-[17px] ${active ? "bg-white font-bold tracking-[-0.6px]" : "bg-[linear-gradient(#f8f8f8,#e8e8e8)]"}`}>
              <span className="absolute left-[2px] top-0 h-full w-px origin-top skew-x-[20deg] bg-black" />
              <span className="absolute right-[2px] top-0 h-full w-px origin-top -skew-x-[20deg] bg-black" />
              {t}
            </span>
          );
        })}
      </div>
    </div>
  );
}

function StatusBar() {
  const cells = [
    { t: "Acct:", w: "w-[52px]" },
    { t: "Open Psns:", w: "w-[90px]" },
    { t: "DT BP:", w: "w-[63px]" },
    { t: "Purch Pwr:", w: "w-[87px]" },
    { t: "Closed P/L:", w: "w-[94px]" },
    { t: "RT TE:", w: "w-[60px]" },
    { t: "Open P/L:", w: "w-[84px]" },
    { t: "ORDER BAR", w: "w-[89px] text-[#108010]" },
    { t: "MACROS", w: "w-[67px] text-[#108010]" },
  ];
  return (
    <div className="flex h-[21px] shrink-0 items-center justify-between border-b-2 border-[#9eb0c2] bg-[#f0f0f0] pl-[3px] pr-[2px] font-['Noto_Sans',sans-serif] text-[14px] text-[#202020]">
      <span>For Help, press F1</span>
      <div className="flex h-full items-center">
        {cells.map((c) => (
          <span key={c.t} className={`flex h-full items-center whitespace-pre border-r border-[#d0d0d0] pl-[4px] ${c.w}`}>{c.t}</span>
        ))}
        <span className="ml-[4px] h-[10px] w-[10px] -translate-y-[3px] rounded-full bg-[radial-gradient(circle_at_35%_30%,#ff9090,#e00000_55%,#700000)]" />
        <span className="ml-[11px] w-[116px] whitespace-pre">21/09/2023 09:10</span>
      </div>
    </div>
  );
}

export default function App() {
  return (
    <div className="flex h-[1080px] w-[1920px] flex-col overflow-hidden bg-[#f0f0f0]">
      <TitleBar />
      <MenuBar />
      <Toolbar />
      <div className="h-px shrink-0 bg-[#a8a8a8]" />
      <ChartPane />
      <div className="flex h-[24px] shrink-0 items-center justify-between bg-[#f0f0f0] pl-[6px] pr-[6px]">
        <span className="h-0 w-0 border-y-[5px] border-r-[5px] border-y-transparent border-r-[#707070]" />
        <div className="flex items-center gap-[8px]">
          <span className="flex h-[18px] w-[19px] items-center justify-center gap-[1px] border border-[#a0a0a0] bg-[linear-gradient(90deg,#f4f4f4,#d8d8d8)]">
            <span className="h-[8px] w-px bg-[#707070]" />
            <span className="h-[8px] w-px bg-[#707070]" />
            <span className="h-[8px] w-px bg-[#707070]" />
          </span>
          <span className="h-0 w-0 border-y-[5px] border-l-[5px] border-y-transparent border-l-[#707070]" />
        </div>
      </div>
      <Tabs />
      <StatusBar />
    </div>
  );
}
